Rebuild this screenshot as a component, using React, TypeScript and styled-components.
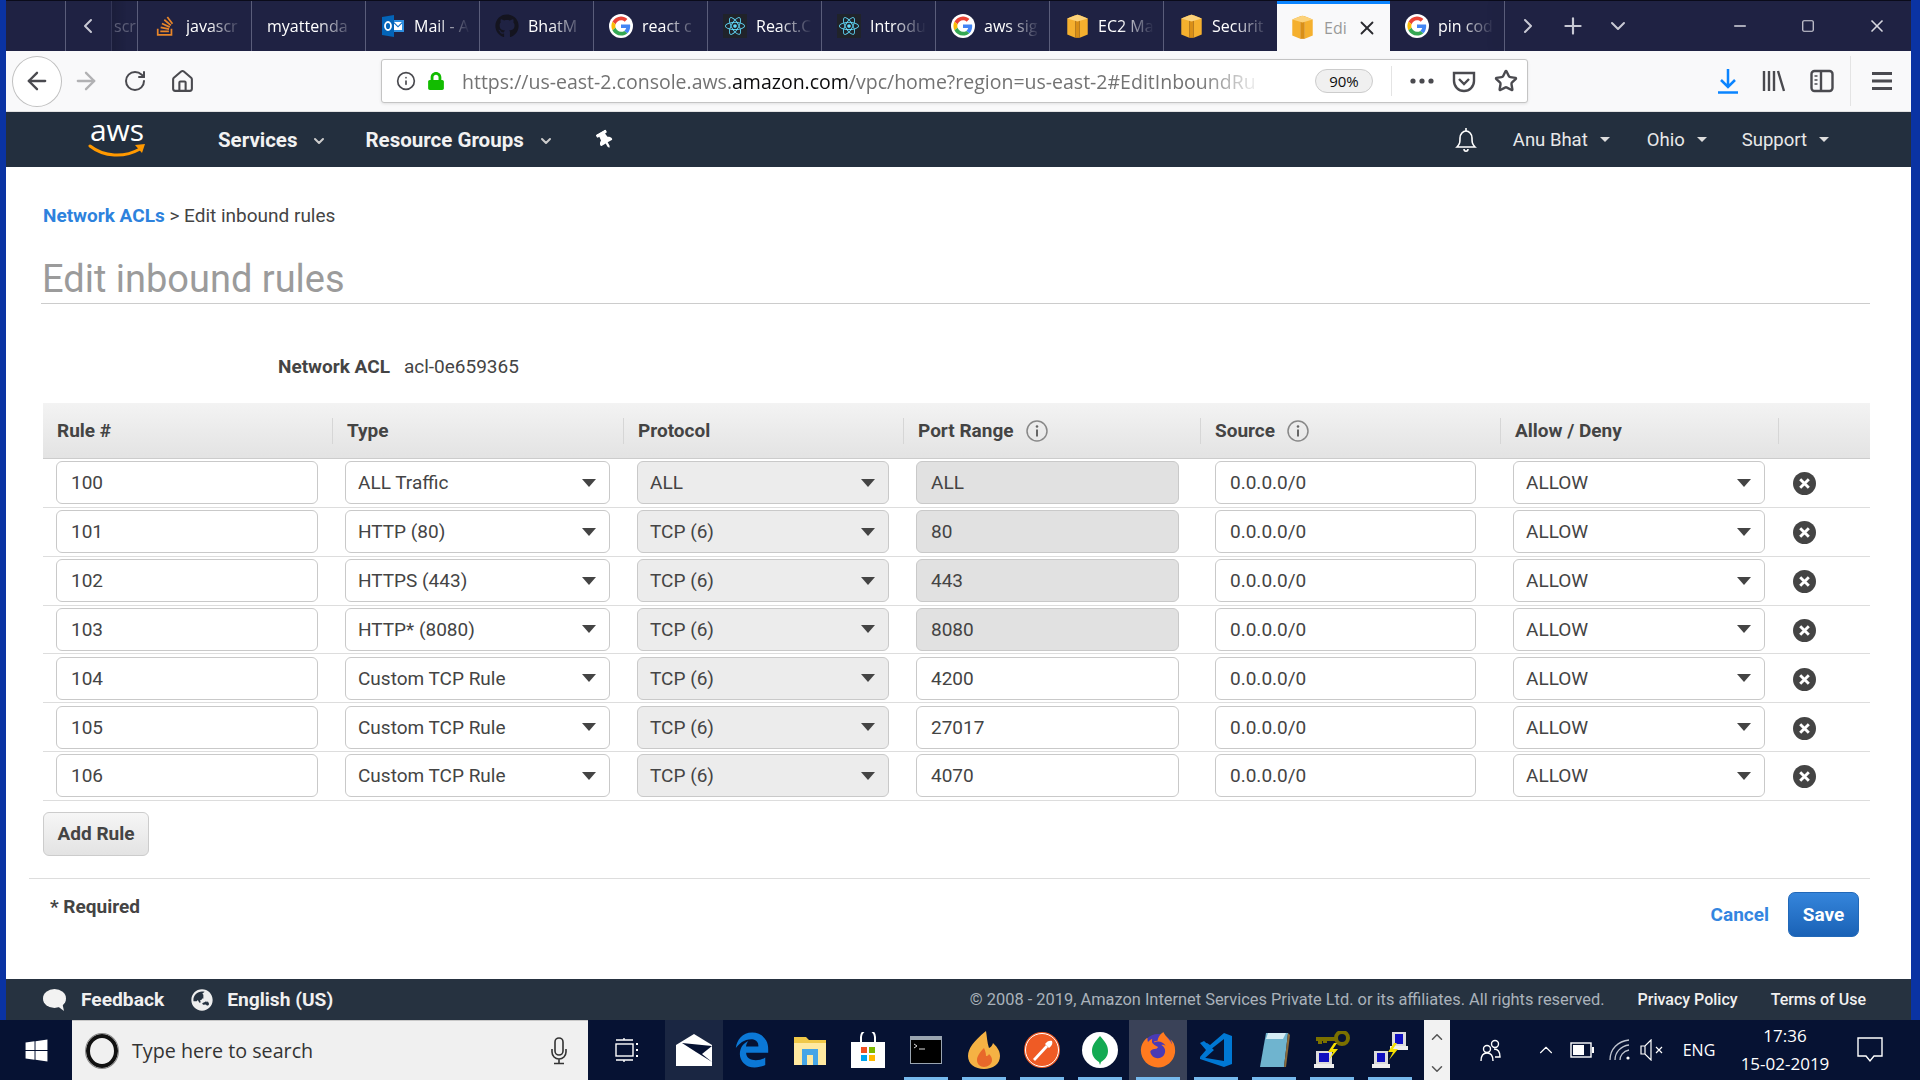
import React from "react";
import styled, { createGlobalStyle, css } from "styled-components";
import { ArrowLeft, ArrowRight, RotateCw, Star, ChevronLeft, ChevronRight, ChevronDown, Plus, X, Minus, Square, Info, Home } from "lucide-react";
import { FaGithub, FaReact, FaStackOverflow, FaWindows, FaLock, FaEdgeLegacy, FaFirefoxBrowser, FaGlobeAsia, FaThumbtack } from "react-icons/fa";

const GlobalStyle = createGlobalStyle`
  html, body { margin: 0; padding: 0; background: #061233; }
  * { box-sizing: border-box; }
`;

const COLS = "289px 291px 280px 297px 300px 278px 92px";

const Page = styled.div`
  width: 1920px;
  height: 1080px;
  overflow: hidden;
  display: flex;
  flex-direction: column;
  font-family: Roboto, "Liberation Sans", sans-serif;
  color: #444;
  font-size: 19px;
`;

const Browser = styled.div`
  flex: 1;
  min-height: 0;
  display: flex;
  flex-direction: column;
  border-left: 6px solid #0a33a3;
  border-right: 9px solid #0a33a3;
`;

const TabBar = styled.div`
  height: 51px;
  flex: none;
  background: #1f2243;
  border-top: 1px solid #0a0b1a;
  display: flex;
  align-items: stretch;
  padding-left: 59px;
  font-family: "Open Sans", "Noto Sans", sans-serif;
  color: #fff;
  font-size: 16px;
`;

const ScrollBack = styled.div`
  width: 72px;
  flex: none;
  border-left: 1px solid #5a5d7a;
  display: flex;
  align-items: center;
  padding-left: 10px;
  overflow: hidden;
  color: #c8c9d4;
`;

const ScrollGhost = styled.span`
  margin-left: 11px;
  opacity: 0.35;
  padding-left: 2px;
  border-left: 1px solid #5a5d7a;
  line-height: 50px;
  background: linear-gradient(to right, #14162c, #1f2243 60%);
`;

const Tab = styled.div<{ $active?: boolean; $first?: boolean }>`
  width: 114px;
  flex: none;
  display: flex;
  align-items: center;
  gap: 9px;
  padding-left: 15px;
  border-left: ${(p) => (p.$first ? "0" : "1px solid #5a5d7a")};
  overflow: hidden;
  position: relative;
  ${(p) =>
    p.$active &&
    css`
      background: #f9f9fa;
      border-left: 0;
      border-top: 3px solid #0a84ff;
      color: #777;
      width: 113px;
      padding-left: 13px;
    `}
`;

const TabIcon = styled.span`
  width: 24px;
  height: 24px;
  flex: none;
  display: flex;
  align-items: center;
  justify-content: center;
`;

const TabTitle = styled.span<{ $wide?: boolean }>`
  white-space: nowrap;
  width: ${(p) => (p.$wide ? "86px" : "62px")};
  overflow: hidden;
  -webkit-mask-image: linear-gradient(to right, #000 ${(p) => (p.$wide ? "50px" : "22px")}, transparent ${(p) => (p.$wide ? "88px" : "56px")});
  mask-image: linear-gradient(to right, #000 ${(p) => (p.$wide ? "50px" : "22px")}, transparent ${(p) => (p.$wide ? "88px" : "56px")});
`;

const ActiveTitle = styled.span`
  white-space: nowrap;
  color: #999;
  margin-left: 1px;
`;

const TabClose = styled.span`
  display: flex;
  color: #2a2a2e;
  margin-left: auto;
  margin-right: 14px;
`;

const TabEnd = styled.div`
  width: 1px;
  background: #5a5d7a;
  box-shadow: -8px 0 10px rgba(0, 0, 0, 0.25);
`;

const TabControls = styled.div`
  display: flex;
  align-items: center;
  color: #c8c9d4;
  padding-left: 11px;
  gap: 20px;
`;

const WindowControls = styled.div`
  margin-left: auto;
  display: flex;
  align-items: center;
  color: #d8d8e0;
  gap: 52px;
  padding-right: 24px;
`;

const Toolbar = styled.div`
  height: 61px;
  flex: none;
  background: #f9f9fa;
  border-bottom: 1px solid #e2e2e2;
  display: flex;
  align-items: center;
  padding-left: 6px;
  color: #4a4a4f;
`;

const BackButton = styled.div`
  width: 50px;
  height: 51px;
  border-radius: 50%;
  background: #fff;
  border: 1px solid #c0c0c0;
  display: flex;
  align-items: center;
  justify-content: center;
  flex: none;
`;

const NavIcons = styled.div`
  display: flex;
  align-items: center;
  gap: 23px;
  margin-left: 10px;
`;

const UrlBar = styled.div`
  margin-left: 186px;
  width: 1147px;
  height: 44px;
  flex: none;
  background: #fff;
  border: 1px solid #c4c4c4;
  border-radius: 3px;
  box-shadow: 0 1px 3px rgba(0, 0, 0, 0.1);
  display: flex;
  align-items: center;
  padding-left: 14px;
`;

const UrlLock = styled.span`
  display: flex;
  margin-left: 11px;
`;

const UrlText = styled.div`
  margin-left: 17px;
  width: 801px;
  flex: none;
  white-space: nowrap;
  overflow: hidden;
  font-family: "Open Sans", "Noto Sans", sans-serif;
  font-size: 19.5px;
  color: #737373;
  -webkit-mask-image: linear-gradient(to right, #000 92%, transparent);
  mask-image: linear-gradient(to right, #000 92%, transparent);
  b {
    font-weight: 400;
    color: #0c0c0d;
  }
`;

const ZoomPill = styled.div`
  margin-left: 52px;
  width: 58px;
  height: 24px;
  flex: none;
  background: #f0f0f0;
  border: 1px solid #ccc;
  border-radius: 12px;
  font-family: "Open Sans", "Noto Sans", sans-serif;
  font-size: 15px;
  color: #0c0c0d;
  display: flex;
  align-items: center;
  justify-content: center;
`;

const UrlActions = styled.div`
  margin-left: 18px;
  height: 30px;
  border-left: 1px solid #e4e4e4;
  padding-left: 18px;
  display: flex;
  align-items: center;
  gap: 18px;
`;

const ToolIcons = styled.div`
  margin-left: 190px;
  display: flex;
  align-items: center;
  gap: 24px;
`;

const ToolDivider = styled.div`
  width: 1px;
  height: 50px;
  background: #e4e4e4;
  margin: 0 -3px 0 -8px;
`;

const AwsNav = styled.div`
  height: 55px;
  flex: none;
  background: #232f3e;
  display: flex;
  align-items: center;
  color: #f2f2f2;
  padding-left: 82px;
`;

const LogoSvg = styled.svg`
  flex: none;
  margin: -11px 0;
`;

const NavBold = styled.span`
  font-weight: 700;
  font-size: 20.5px;
  white-space: nowrap;
`;

const NavMenu = styled.div`
  margin-left: 70px;
  display: flex;
  align-items: center;
`;

const NavChevron = styled.span`
  display: flex;
  color: #ccc;
  margin: 3px 38px 0 14px;
`;

const NavPin = styled.span`
  display: flex;
  margin-left: 4px;
  transform: rotate(-30deg);
`;

const UserMenu = styled.div`
  margin-left: auto;
  display: flex;
  align-items: center;
  padding-right: 82px;
  font-size: 18.5px;
  color: #e8e8e8;
`;

const UserItem = styled.span<{ $gap: number }>`
  white-space: nowrap;
  display: flex;
  align-items: center;
  margin-left: ${(p) => p.$gap}px;
  &::after {
    content: "";
    margin-left: 12px;
    border-left: 5px solid transparent;
    border-right: 5px solid transparent;
    border-top: 5px solid #ddd;
  }
`;

const Content = styled.main`
  flex: 1;
  min-height: 0;
  background: #fff;
  padding: 37px 41px 0 37px;
`;

const Breadcrumb = styled.div`
  line-height: 24px;
  a {
    color: #2d82dd;
    font-weight: 700;
    text-decoration: none;
  }
`;

const Title = styled.h1`
  margin: 0 0 0 -2px;
  padding: 30px 0 3px 1px;
  font-size: 38px;
  line-height: 42px;
  font-weight: 400;
  color: #9b9b9b;
  border-bottom: 1px solid #ccc;
`;

const AclLine = styled.div`
  margin-top: 51px;
  padding-left: 235px;
  line-height: 24px;
  b {
    margin-right: 14px;
  }
`;

const Table = styled.div`
  margin-top: 24px;
`;

const HeadRow = styled.div`
  display: grid;
  grid-template-columns: ${COLS};
  height: 56px;
  align-items: center;
  background: linear-gradient(#f3f3f3, #e3e3e3);
  border-bottom: 1px solid #ccc;
`;

const HeadCell = styled.div`
  height: 26px;
  display: flex;
  align-items: center;
  gap: 12px;
  padding-left: 14px;
  font-weight: 700;
  border-left: 1px solid #d6d6d6;
  &:first-child {
    border-left: 0;
  }
`;

const Row = styled.div`
  display: grid;
  grid-template-columns: ${COLS};
  height: 48.85px;
  align-items: center;
  border-bottom: 1px solid #ddd;
`;

const Cell = styled.div<{ $l: number; $r: number }>`
  padding: 0 ${(p) => p.$r}px 0 ${(p) => p.$l}px;
`;

const Field = styled.div<{ $disabled?: boolean }>`
  height: 43px;
  border: 1px solid #c9c9c9;
  border-radius: 6px;
  padding-left: 14px;
  display: flex;
  align-items: center;
  background: ${(p) => (p.$disabled ? "#e1e1e1" : "#fff")};
`;

const Select = styled.div<{ $disabled?: boolean }>`
  height: 43px;
  border: 1px solid #c9c9c9;
  border-radius: 6px;
  padding: 0 13px 0 12px;
  display: flex;
  align-items: center;
  justify-content: space-between;
  background: ${(p) => (p.$disabled ? "#ececec" : "#fff")};
  &::after {
    content: "";
    border-left: 7px solid transparent;
    border-right: 7px solid transparent;
    border-top: 8px solid #444;
  }
`;

const RemoveCell = styled.div`
  padding: 2px 0 0 15px;
  display: flex;
`;

const AddRule = styled.button`
  display: block;
  margin-top: 11px;
  width: 106px;
  height: 44px;
  padding: 0;
  border: 1px solid #ccc;
  border-radius: 6px;
  background: linear-gradient(#f6f6f6, #e3e3e3);
  font: 700 19px Roboto, "Liberation Sans", sans-serif;
  color: #444;
`;

const FormFooter = styled.div`
  margin: 22px 0 0 -14px;
  border-top: 1px solid #ddd;
  padding: 13px 11px 0 21px;
  display: flex;
  justify-content: space-between;
  align-items: flex-start;
`;

const Required = styled.b`
  margin-top: 3px;
  line-height: 24px;
`;

const FormActions = styled.div`
  display: flex;
  align-items: center;
  gap: 19px;
`;

const CancelLink = styled.a`
  color: #3385e0;
  font-weight: 700;
`;

const SaveButton = styled.button`
  width: 71px;
  height: 45px;
  padding: 0;
  border: 1px solid #2168b8;
  border-radius: 7px;
  background: linear-gradient(#3585db, #1a62b6);
  color: #fff;
  font: 700 19px Roboto, "Liberation Sans", sans-serif;
`;

const SiteFooter = styled.footer`
  height: 41px;
  flex: none;
  background: #263240;
  display: flex;
  align-items: center;
  padding: 0 45px 0 37px;
  color: #f0f0f0;
`;

const FooterLink = styled.span`
  display: flex;
  align-items: center;
  gap: 14px;
  font-weight: 700;
  font-size: 19.2px;
  margin-right: 27px;
`;

const Copyright = styled.span`
  margin-left: auto;
  font-size: 16.4px;
  color: #aab2bb;
`;

const LegalLink = styled.span`
  font-size: 16px;
  font-weight: 500;
  margin-left: 33px;
`;

const Taskbar = styled.div`
  height: 60px;
  flex: none;
  background: #061233;
  display: flex;
  align-items: stretch;
  color: #fff;
`;

const StartButton = styled.div`
  width: 72px;
  display: flex;
  align-items: center;
  justify-content: center;
  flex: none;
`;

const SearchBox = styled.div`
  width: 516px;
  flex: none;
  background: #f0f0f0;
  border-top: 1px solid #c8c8c8;
  display: flex;
  align-items: center;
  padding: 0 20px 0 14px;
  color: #333;
  font-family: "Open Sans", "Noto Sans", sans-serif;
  font-size: 19.7px;
`;

const Cortana = styled.span`
  width: 32px;
  height: 34px;
  border-radius: 50%;
  border: 4px solid #111;
  outline: 1px solid #888;
  flex: none;
  margin-right: 14px;
`;

const MicSlot = styled.span`
  margin-left: auto;
  display: flex;
`;

const TaskView = styled.div`
  width: 77px;
  flex: none;
  display: flex;
  align-items: center;
  justify-content: center;
`;

const slotFill = { none: "transparent", soft: "#1a2642", strong: "#3a4258" };

const AppSlot = styled.div<{ $open?: boolean; $fill: keyof typeof slotFill }>`
  width: 58px;
  flex: none;
  display: flex;
  align-items: center;
  justify-content: center;
  position: relative;
  background: ${(p) => slotFill[p.$fill]};
  ${(p) =>
    p.$open &&
    css`
      &::after {
        content: "";
        position: absolute;
        bottom: 0;
        left: 7px;
        right: 7px;
        height: 3px;
        background: #76b9ed;
      }
    `}
`;

const SlotScroller = styled.div`
  width: 26px;
  margin-left: 5px;
  flex: none;
  background: #f2f2f2;
  color: #555;
  display: flex;
  flex-direction: column;
  align-items: center;
  justify-content: space-between;
  padding: 8px 0 2px;
`;

const FlipUp = styled.span`
  display: flex;
  transform: rotate(180deg);
`;

const TrayItem = styled.div<{ $w: number }>`
  width: ${(p) => p.$w}px;
  flex: none;
  display: flex;
  align-items: center;
  justify-content: center;
  font-family: "Open Sans", "Noto Sans", sans-serif;
  font-size: 16px;
`;

const Clock = styled.div`
  text-align: center;
  font-size: 17px;
  line-height: 28px;
  white-space: nowrap;
`;

const GoogleG = () => (
  <svg width="24" height="24" viewBox="-6 -6 60 60">
    <circle cx="24" cy="24" r="30" fill="#fff" />
    <path fill="#EA4335" d="M24 9.5c3.54 0 6.71 1.22 9.21 3.6l6.85-6.85C35.9 2.38 30.47 0 24 0 14.62 0 6.51 5.38 2.56 13.22l7.98 6.19C12.43 13.72 17.74 9.5 24 9.5z" />
    <path fill="#4285F4" d="M46.98 24.55c0-1.57-.15-3.09-.38-4.55H24v9.02h12.94c-.58 2.96-2.26 5.48-4.78 7.18l7.73 6c4.51-4.18 7.09-10.36 7.09-17.65z" />
    <path fill="#FBBC05" d="M10.53 28.59c-.48-1.45-.76-2.99-.76-4.59s.27-3.14.76-4.59l-7.98-6.19C.92 16.46 0 20.12 0 24c0 3.88.92 7.54 2.56 10.78l7.97-6.19z" />
    <path fill="#34A853" d="M24 48c6.48 0 11.93-2.13 15.89-5.81l-7.73-6c-2.15 1.45-4.92 2.3-8.16 2.3-6.26 0-11.57-4.22-13.47-9.91l-7.98 6.19C6.51 42.62 14.62 48 24 48z" />
  </svg>
);

const AwsBox = () => (
  <svg width="21" height="25" viewBox="2 1 18 22">
    <path fill="#f5b02e" d="M2 5l7-3v20l-7-3z" />
    <path fill="#f5b02e" d="M20 5l-7-3v20l7-3z" />
    <path fill="#d98f17" d="M9 2h4v20H9z" />
    <path fill="#fcd27a" d="M2 5l9-3.5L20 5l-9 2.5z" />
  </svg>
);

const OutlookIcon = () => (
  <svg width="24" height="24" viewBox="0 0 24 24">
    <path fill="#2f8fe0" d="M11 6h12v12H11z" />
    <path fill="#fff" d="M13 8h8v8h-8z" />
    <path fill="#0a6cc4" d="M13 8l4 4 4-4v1.5l-4 4-4-4z" />
    <path fill="#0364b8" d="M1 3l12-2v22L1 21z" />
    <ellipse cx="7" cy="12" rx="3" ry="4" fill="none" stroke="#fff" strokeWidth="1.8" />
  </svg>
);

const ReactTile = () => (
  <svg width="24" height="24" viewBox="0 0 24 24">
    <rect width="24" height="24" fill="#20232a" />
    <foreignObject x="2" y="2" width="20" height="20">
      <FaReact size={20} color="#61dafb" />
    </foreignObject>
  </svg>
);

const AwsLogo = () => (
  <LogoSvg width="60" height="66" viewBox="0 -11 60 66">
    <text x="29" y="23" textAnchor="middle" fill="#fff" fontFamily="Open Sans, sans-serif" fontSize="30">
      aws
    </text>
    <path d="M2 28c14 11 34 12 50 3" stroke="#f90" strokeWidth="3" fill="none" strokeLinecap="round" />
    <path d="M47 27l10-1-3 9z" fill="#f90" />
  </LogoSvg>
);

const InfoCircle = () => (
  <svg width="22" height="22" viewBox="0 0 22 22">
    <circle cx="11" cy="11" r="10" fill="none" stroke="#888" strokeWidth="1.5" />
    <circle cx="11" cy="6.5" r="1.3" fill="#666" />
    <path d="M11 9.5v7" stroke="#666" strokeWidth="2" />
  </svg>
);

const RemoveIcon = () => (
  <svg width="23" height="23" viewBox="0 0 24 24">
    <circle cx="12" cy="12" r="12" fill="#444" />
    <path d="M7.5 7.5l9 9M16.5 7.5l-9 9" stroke="#fff" strokeWidth="3" />
  </svg>
);

const PocketIcon = () => (
  <svg width="24" height="24" viewBox="0 0 24 24" fill="none" stroke="#4a4a4f" strokeWidth="2.4">
    <path d="M2 4h20v8a10 10 0 0 1-20 0z" />
    <path d="M7 10l5 5 5-5" />
  </svg>
);

const DownloadIcon = () => (
  <svg width="20" height="26" viewBox="0 0 20 26" fill="none" stroke="#0a84ff" strokeWidth="2.5">
    <path d="M10 1v18M3 12l7 7 7-7" />
    <path d="M0 24.5h20" />
  </svg>
);

const LibraryIcon = () => (
  <svg width="24" height="24" viewBox="0 0 24 24" fill="none" stroke="#4a4a4f" strokeWidth="2.4">
    <path d="M2 2v20M7 2v20M12 2v20M16 2l6 20" />
  </svg>
);

const SidebarIcon = () => (
  <svg width="24" height="24" viewBox="0 0 24 24" fill="none" stroke="#4a4a4f" strokeWidth="2.4">
    <rect x="1.5" y="2" width="21" height="20" rx="3" />
    <path d="M11 2v20" />
    <path d="M4.5 7h3M4.5 11h3M4.5 15h3" strokeWidth="1.6" />
  </svg>
);

const MenuIcon = () => (
  <svg width="20" height="20" viewBox="0 0 20 20" fill="#4a4a4f">
    <rect y="1" width="20" height="3" />
    <rect y="8.5" width="20" height="3" />
    <rect y="16" width="20" height="3" />
  </svg>
);

const BellIcon = () => (
  <svg width="22" height="26" viewBox="0 0 22 26" fill="none" stroke="#fff" strokeWidth="1.6">
    <path d="M2 20c3-3 3-5 3-9 0-4 3-7 6-7s6 3 6 7c0 4 0 6 3 9z" />
    <path d="M9 22c0 3 4 3 4 0M11 1v3" />
  </svg>
);

const FeedbackIcon = () => (
  <svg width="24" height="22" viewBox="0 0 24 22" fill="#f2f2f2">
    <ellipse cx="11.5" cy="9.5" rx="11.5" ry="9.5" />
    <path d="M13 16l8 6-2-9z" />
  </svg>
);

const MicIcon = () => (
  <svg width="18" height="28" viewBox="0 0 18 28" fill="none" stroke="#333" strokeWidth="1.6">
    <rect x="5" y="1" width="8" height="17" rx="4" />
    <path d="M2 12v3a7 7 0 0 0 14 0v-3M9 22v4M4 26.5h10" />
  </svg>
);

const TaskViewIcon = () => (
  <svg width="26" height="26" viewBox="0 0 26 26" fill="none" stroke="#fff" strokeWidth="1.4">
    <rect x="2" y="7" width="17" height="12" />
    <path d="M2 3h17M2 23h17M10 1v2M10 23v2" />
    <path d="M23 6v2M23 12v2M23 18v2" strokeWidth="2" />
  </svg>
);

const MailTile = () => (
  <svg width="36" height="32" viewBox="0 0 36 32">
    <path fill="#fff" d="M0 11L18 0l18 11v21H0z" />
    <path fill="#061233" d="M6 9l30 3-10 8 10 8-16-10z" />
  </svg>
);

const FolderIcon = () => (
  <svg width="32" height="30" viewBox="0 0 32 30">
    <path fill="#f0c848" d="M0 2h12l3 3h17v25H0z" />
    <path fill="#ffe9a0" d="M0 8h32v22H0z" />
    <path fill="#45a5e6" d="M8 14h16v16h-5v-10h-6v10H8z" />
  </svg>
);

const StoreIcon = () => (
  <svg width="34" height="36" viewBox="0 0 34 36">
    <path d="M10 10V5a7 7 0 0 1 14 0v5" fill="none" stroke="#fff" strokeWidth="2" />
    <path fill="#fff" d="M0 10h34v26H0z" />
    <path fill="#f25022" d="M10 15h6v6h-6z" />
    <path fill="#7fba00" d="M18 15h6v6h-6z" />
    <path fill="#00a4ef" d="M10 23h6v6h-6z" />
    <path fill="#ffb900" d="M18 23h6v6h-6z" />
  </svg>
);

const CmdIcon = () => (
  <svg width="32" height="28" viewBox="0 0 32 28">
    <rect width="32" height="28" fill="#9aa5b1" />
    <rect x="1" y="4" width="30" height="23" fill="#000" />
    <path d="M4 8l3 2-3 2M9 13h6" stroke="#ddd" fill="none" />
  </svg>
);

const FlameIcon = () => (
  <svg width="32" height="38" viewBox="0 0 32 38">
    <path fill="#f5b244" d="M18 0C6 10 0 17 0 25c0 8 7 13 16 13s16-5 16-13c0-6-4-10-7-13-1 3-2 4-4 5-2-6-2-11-3-17z" />
    <path fill="#e8682a" d="M16 17c-5 5-7 9-7 12 0 4 3 7 7 7s8-3 8-7c0-2-1-4-3-6-1 2-2 2-3 2 0-3-1-6-2-8z" />
  </svg>
);

const PostmanTile = () => (
  <svg width="36" height="36" viewBox="0 0 36 36">
    <circle cx="18" cy="18" r="18" fill="#ef5b25" />
    <circle cx="18" cy="18" r="16.5" fill="none" stroke="#fff" strokeWidth="1" />
    <path d="M9 27l13-14 2 2-13 14z" fill="#fff" />
    <path d="M21 12c2-3 5-4 7-3 1 2 0 5-3 7z" fill="#fff" />
  </svg>
);

const MongoTile = () => (
  <svg width="36" height="36" viewBox="0 0 36 36">
    <circle cx="18" cy="18" r="18" fill="#fff" />
    <path fill="#13aa52" d="M18 4c5 6 8 9 8 15 0 6-4 9-7 11l-1 3-1-3c-3-2-7-5-7-11 0-6 3-9 8-15z" />
  </svg>
);

const FirefoxIcon = () => (
  <svg width="36" height="36" viewBox="0 0 36 36">
    <circle cx="18" cy="18" r="16" fill="#4a3ab5" />
    <foreignObject x="0" y="0" width="36" height="36">
      <FaFirefoxBrowser size={36} color="#ff7a1f" />
    </foreignObject>
  </svg>
);

const VsCodeIcon = () => (
  <svg width="36" height="36" viewBox="0 0 36 36">
    <path fill="#0078d4" d="M26 1l8 3v28l-8 3L2 27v-2l24 4V7L12 18l-6-5 3-2 3 2z" />
    <path fill="#0078d4" d="M2 11l4-2 10 9-10 9-4-2 6-7z" />
  </svg>
);

const NotepadIcon = () => (
  <svg width="32" height="38" viewBox="0 0 32 38">
    <path fill="#6fb4cf" d="M8 2h22l-4 34H2z" />
    <path fill="#d5ecf4" d="M10 2h18l-3 6H8z" />
    <path fill="#8a6a3a" d="M30 2l-4 34h2l4-32z" />
  </svg>
);

const KeyPcIcon = () => (
  <svg width="36" height="38" viewBox="0 0 36 38">
    <circle cx="28" cy="7" r="6" fill="none" stroke="#7a7000" strokeWidth="4" />
    <path d="M2 8h20M6 8v5M11 8v4" stroke="#7a7000" strokeWidth="4" />
    <rect x="2" y="20" width="16" height="13" fill="#dcdcdc" />
    <rect x="5" y="22" width="10" height="9" fill="#1010c0" />
    <rect x="0" y="33" width="20" height="4" fill="#eee" />
    <path d="M20 12l-6 9h5l-4 8 9-11h-5l4-6z" fill="#f5e000" />
  </svg>
);

const NetworkIcon = () => (
  <svg width="36" height="38" viewBox="0 0 36 38">
    <rect x="20" y="1" width="14" height="14" fill="#dcdcdc" />
    <rect x="23" y="3" width="8" height="10" fill="#1010c0" />
    <rect x="18" y="15" width="18" height="4" fill="#eee" />
    <rect x="2" y="20" width="14" height="13" fill="#dcdcdc" />
    <rect x="5" y="22" width="8" height="9" fill="#1010c0" />
    <rect x="0" y="33" width="18" height="4" fill="#eee" />
    <path d="M22 12l-6 9h5l-4 8 9-11h-5l4-6z" fill="#f5e000" />
  </svg>
);

const PeopleIcon = () => (
  <svg width="24" height="24" viewBox="0 0 24 24" fill="none" stroke="#fff" strokeWidth="1.4">
    <circle cx="9" cy="11" r="3.5" />
    <path d="M3 23c0-5 2-8 6-8s6 3 6 8" />
    <circle cx="17" cy="6" r="3.5" />
    <path d="M16 11c4 0 6 3 6 8h-5" />
  </svg>
);

const BatteryIcon = () => (
  <svg width="24" height="16" viewBox="0 0 24 16">
    <rect x="1" y="1" width="20" height="14" fill="none" stroke="#fff" strokeWidth="1.4" />
    <rect x="3" y="3" width="11" height="10" fill="#fff" />
    <rect x="22" y="5" width="2" height="6" fill="#fff" />
  </svg>
);

const WifiIcon = () => (
  <svg width="22" height="22" viewBox="0 0 22 22" fill="none" stroke="#c0c5d0" strokeWidth="1.3">
    <path d="M1 21C1 10 9 2 20 1M6 21c0-8 6-14 14-15M11 21c0-4 3-9 9-10" />
    <circle cx="19" cy="19" r="1.6" fill="#fff" stroke="none" />
  </svg>
);

const MuteIcon = () => (
  <svg width="24" height="22" viewBox="0 0 24 22" fill="none" stroke="#fff" strokeWidth="1.2">
    <path d="M1 7h4l6-6v20l-6-6H1zM5 7v8" />
    <path d="M16 8l6 6M22 8l-6 6" />
  </svg>
);

const NotifyIcon = () => (
  <svg width="26" height="26" viewBox="0 0 26 26" fill="none" stroke="#fff" strokeWidth="1.4">
    <path d="M1 1h24v18h-8l-4 5-4-5H1z" />
  </svg>
);

const tabs: { title: string; icon: React.ReactNode }[] = [
  { title: "javascr", icon: <FaStackOverflow size={22} color="#e8862a" /> },
  { title: "myattenda", icon: null },
  { title: "Mail - A", icon: <OutlookIcon /> },
  { title: "BhatM", icon: <FaGithub size={24} color="#14141f" /> },
  { title: "react c", icon: <GoogleG /> },
  { title: "React.C", icon: <ReactTile /> },
  { title: "Introdu", icon: <ReactTile /> },
  { title: "aws sig", icon: <GoogleG /> },
  { title: "EC2 Ma", icon: <AwsBox /> },
  { title: "Securit", icon: <AwsBox /> },
];

const rows = [
  { rule: "100", type: "ALL Traffic", proto: "ALL", port: "ALL", locked: true },
  { rule: "101", type: "HTTP (80)", proto: "TCP (6)", port: "80", locked: true },
  { rule: "102", type: "HTTPS (443)", proto: "TCP (6)", port: "443", locked: true },
  { rule: "103", type: "HTTP* (8080)", proto: "TCP (6)", port: "8080", locked: true },
  { rule: "104", type: "Custom TCP Rule", proto: "TCP (6)", port: "4200", locked: false },
  { rule: "105", type: "Custom TCP Rule", proto: "TCP (6)", port: "27017", locked: false },
  { rule: "106", type: "Custom TCP Rule", proto: "TCP (6)", port: "4070", locked: false },
];

const apps: { icon: React.ReactNode; open?: boolean; fill?: keyof typeof slotFill }[] = [
  { icon: <MailTile />, fill: "soft" },
  { icon: <FaEdgeLegacy size={36} color="#0b78d6" /> },
  { icon: <FolderIcon /> },
  { icon: <StoreIcon /> },
  { icon: <CmdIcon />, open: true },
  { icon: <FlameIcon />, open: true },
  { icon: <PostmanTile />, open: true },
  { icon: <MongoTile />, open: true },
  { icon: <FirefoxIcon />, open: true, fill: "strong" },
  { icon: <VsCodeIcon />, open: true },
  { icon: <NotepadIcon />, open: true },
  { icon: <KeyPcIcon />, open: true },
  { icon: <NetworkIcon />, open: true },
];

export default function App() {
  return (
    <Page>
      <GlobalStyle />
      <Browser>
        <TabBar>
          <ScrollBack>
            <ChevronLeft size={24} />
            <ScrollGhost>scr</ScrollGhost>
          </ScrollBack>
          {tabs.map((t) => (
            <Tab key={t.title}>
              {t.icon && <TabIcon>{t.icon}</TabIcon>}
              <TabTitle $wide={!t.icon}>{t.title}</TabTitle>
            </Tab>
          ))}
          <Tab $active>
            <TabIcon>
              <AwsBox />
            </TabIcon>
            <ActiveTitle>Edi</ActiveTitle>
            <TabClose>
              <X size={22} />
            </TabClose>
          </Tab>
          <Tab $first>
            <TabIcon>
              <GoogleG />
            </TabIcon>
            <TabTitle>pin cod</TabTitle>
          </Tab>
          <TabEnd />
          <TabControls>
            <ChevronRight size={24} />
            <Plus size={26} />
            <ChevronDown size={24} />
          </TabControls>
          <WindowControls>
            <Minus size={18} />
            <Square size={14} />
            <X size={20} />
          </WindowControls>
        </TabBar>
        <Toolbar>
          <BackButton>
            <ArrowLeft size={28} />
          </BackButton>
          <NavIcons>
            <ArrowRight size={28} color="#b1b1b3" />
            <RotateCw size={24} />
            <Home size={25} />
          </NavIcons>
          <UrlBar>
            <Info size={20} />
            <UrlLock>
              <FaLock size={18} color="#12bc00" />
            </UrlLock>
            <UrlText>
              https://us-east-2.console.aws.<b>amazon.com</b>/vpc/home?region=us-east-2#EditInboundRu
            </UrlText>
            <ZoomPill>90%</ZoomPill>
            <UrlActions>
              <svg width="24" height="6" viewBox="0 0 24 6" fill="#4a4a4f">
                <circle cx="3" cy="3" r="2.6" />
                <circle cx="12" cy="3" r="2.6" />
                <circle cx="21" cy="3" r="2.6" />
              </svg>
              <PocketIcon />
              <Star size={24} strokeWidth={2.4} />
            </UrlActions>
          </UrlBar>
          <ToolIcons>
            <DownloadIcon />
            <LibraryIcon />
            <SidebarIcon />
            <ToolDivider />
            <MenuIcon />
          </ToolIcons>
        </Toolbar>
        <AwsNav>
          <AwsLogo />
          <NavMenu>
            <NavBold>Services</NavBold>
            <NavChevron>
              <ChevronDown size={16} strokeWidth={3} />
            </NavChevron>
            <NavBold>Resource Groups</NavBold>
            <NavChevron>
              <ChevronDown size={16} strokeWidth={3} />
            </NavChevron>
            <NavPin>
              <FaThumbtack size={18} color="#fff" />
            </NavPin>
          </NavMenu>
          <UserMenu>
            <BellIcon />
            <UserItem $gap={36}>Anu Bhat</UserItem>
            <UserItem $gap={37}>Ohio</UserItem>
            <UserItem $gap={35}>Support</UserItem>
          </UserMenu>
        </AwsNav>
        <Content>
          <Breadcrumb>
            <a>Network ACLs</a> &gt; Edit inbound rules
          </Breadcrumb>
          <Title>Edit inbound rules</Title>
          <AclLine>
            <b>Network ACL</b>acl-0e659365
          </AclLine>
          <Table>
            <HeadRow>
              <HeadCell>Rule #</HeadCell>
              <HeadCell>Type</HeadCell>
              <HeadCell>Protocol</HeadCell>
              <HeadCell>
                Port Range <InfoCircle />
              </HeadCell>
              <HeadCell>
                Source <InfoCircle />
              </HeadCell>
              <HeadCell>Allow / Deny</HeadCell>
              <HeadCell />
            </HeadRow>
            {rows.map((r) => (
              <Row key={r.rule}>
                <Cell $l={13} $r={14}>
                  <Field>{r.rule}</Field>
                </Cell>
                <Cell $l={13} $r={13}>
                  <Select>{r.type}</Select>
                </Cell>
                <Cell $l={14} $r={14}>
                  <Select $disabled>{r.proto}</Select>
                </Cell>
                <Cell $l={13} $r={21}>
                  <Field $disabled={r.locked}>{r.port}</Field>
                </Cell>
                <Cell $l={15} $r={24}>
                  <Field>0.0.0.0/0</Field>
                </Cell>
                <Cell $l={13} $r={13}>
                  <Select>ALLOW</Select>
                </Cell>
                <RemoveCell>
                  <RemoveIcon />
                </RemoveCell>
              </Row>
            ))}
          </Table>
          <AddRule>Add Rule</AddRule>
          <FormFooter>
            <Required>* Required</Required>
            <FormActions>
              <CancelLink>Cancel</CancelLink>
              <SaveButton>Save</SaveButton>
            </FormActions>
          </FormFooter>
        </Content>
        <SiteFooter>
          <FooterLink>
            <FeedbackIcon />
            Feedback
          </FooterLink>
          <FooterLink>
            <FaGlobeAsia size={22} color="#eee" />
            English (US)
          </FooterLink>
          <Copyright>© 2008 - 2019, Amazon Internet Services Private Ltd. or its affiliates. All rights reserved.</Copyright>
          <LegalLink>Privacy Policy</LegalLink>
          <LegalLink>Terms of Use</LegalLink>
        </SiteFooter>
      </Browser>
      <Taskbar>
        <StartButton>
          <FaWindows size={25} />
        </StartButton>
        <SearchBox>
          <Cortana />
          Type here to search
          <MicSlot>
            <MicIcon />
          </MicSlot>
        </SearchBox>
        <TaskView>
          <TaskViewIcon />
        </TaskView>
        {apps.map((a, i) => (
          <AppSlot key={i} $open={a.open} $fill={a.fill ?? "none"}>
            {a.icon}
          </AppSlot>
        ))}
        <SlotScroller>
          <FlipUp>
            <ChevronDown size={18} />
          </FlipUp>
          <ChevronDown size={18} />
        </SlotScroller>
        <TrayItem $w={80}>
          <PeopleIcon />
        </TrayItem>
        <TrayItem $w={32}>
          <FlipUp>
            <ChevronDown size={22} strokeWidth={1.2} />
          </FlipUp>
        </TrayItem>
        <TrayItem $w={40}>
          <BatteryIcon />
        </TrayItem>
        <TrayItem $w={36}>
          <WifiIcon />
        </TrayItem>
        <TrayItem $w={28}>
          <MuteIcon />
        </TrayItem>
        <TrayItem $w={66}>ENG</TrayItem>
        <TrayItem $w={106}>
          <Clock>
            17:36
            <br />
            15-02-2019
          </Clock>
        </TrayItem>
        <TrayItem $w={64}>
          <NotifyIcon />
        </TrayItem>
      </Taskbar>
    </Page>
  );
}
